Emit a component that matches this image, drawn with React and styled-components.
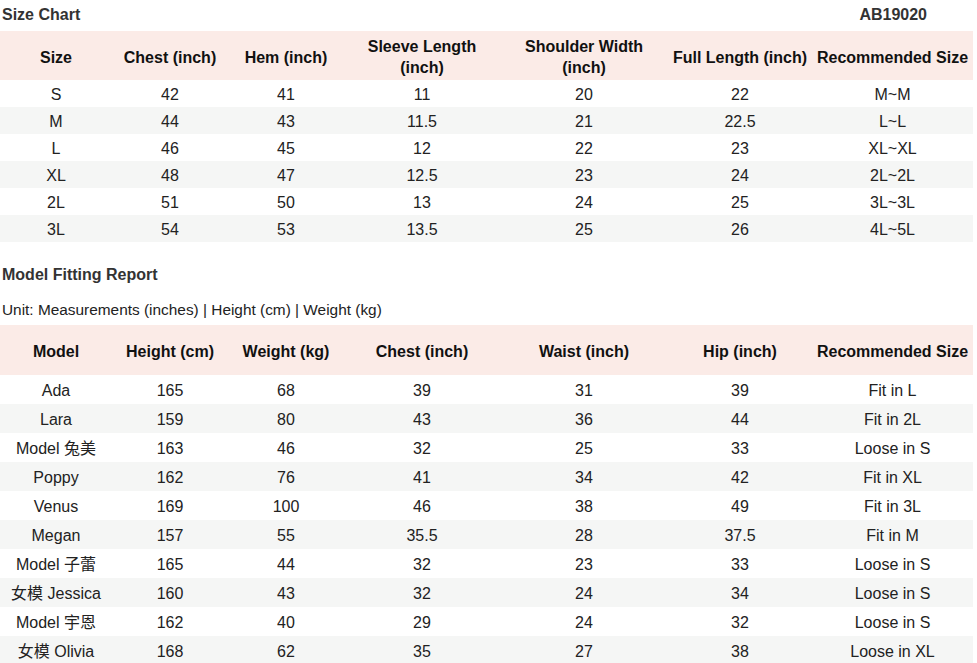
import React from "react";
import styled, { createGlobalStyle } from "styled-components";

const Global = createGlobalStyle`
  html, body { margin: 0; padding: 0; background: #fff; }
  body { font-family: "Liberation Sans", Arial, "Noto Sans CJK SC", sans-serif; }
`;

const Page = styled.div`
  width: 973px;
  color: #222;
`;

const TitleBar = styled.div`
  display: flex;
  justify-content: space-between;
  align-items: center;
  height: 31px;
  padding: 0 46px 2px 2px;
  box-sizing: border-box;
  font-size: 16px;
  font-weight: bold;
  color: #333;
`;

const SectionTitle = styled.div`
  padding: 23px 0 0 2px;
  line-height: 20px;
  font-size: 16px;
  font-weight: bold;
  color: #333;
`;

const Note = styled.div`
  margin-top: 15px;
  margin-bottom: 5px;
  padding-left: 2px;
  line-height: 20px;
  font-size: 15.4px;
  color: #222;
`;

const Table = styled.table`
  width: 973px;
  border-collapse: collapse;
  table-layout: fixed;
  font-size: 16px;
`;

const HeadRow = styled.tr`
  height: ${(p) => p.$h}px;
  background: #fbebe7;
`;

const HeadCell = styled.th`
  padding: 3px 0 0;
  font-weight: bold;
  color: #111;
  line-height: 21px;
  text-align: center;
  vertical-align: middle;
`;

const Row = styled.tr`
  height: ${(p) => p.$h}px;
  background: ${(p) => (p.$odd ? "#f5f6f5" : "#fff")};
`;

const Cell = styled.td`
  padding: 2px 0 0;
  text-align: center;
  vertical-align: middle;
  line-height: 18px;
  white-space: nowrap;
`;

const widths = [112, 116, 116, 156, 168, 144, 161];

const Cols = () => (
  <colgroup>
    {widths.map((w, i) => (
      <col key={i} style={{ width: w }} />
    ))}
  </colgroup>
);

const sizeHead = [
  "Size",
  "Chest (inch)",
  "Hem (inch)",
  ["Sleeve Length", "(inch)"],
  ["Shoulder Width", "(inch)"],
  "Full Length (inch)",
  "Recommended Size",
];

const sizeRows = [
  ["S", "42", "41", "11", "20", "22", "M~M"],
  ["M", "44", "43", "11.5", "21", "22.5", "L~L"],
  ["L", "46", "45", "12", "22", "23", "XL~XL"],
  ["XL", "48", "47", "12.5", "23", "24", "2L~2L"],
  ["2L", "51", "50", "13", "24", "25", "3L~3L"],
  ["3L", "54", "53", "13.5", "25", "26", "4L~5L"],
];

const modelHead = [
  "Model",
  "Height (cm)",
  "Weight (kg)",
  "Chest (inch)",
  "Waist (inch)",
  "Hip (inch)",
  "Recommended Size",
];

const modelRows = [
  ["Ada", "165", "68", "39", "31", "39", "Fit in L"],
  ["Lara", "159", "80", "43", "36", "44", "Fit in 2L"],
  ["Model 兔美", "163", "46", "32", "25", "33", "Loose in S"],
  ["Poppy", "162", "76", "41", "34", "42", "Fit in XL"],
  ["Venus", "169", "100", "46", "38", "49", "Fit in 3L"],
  ["Megan", "157", "55", "35.5", "28", "37.5", "Fit in M"],
  ["Model 子蕾", "165", "44", "32", "23", "33", "Loose in S"],
  ["女模 Jessica", "160", "43", "32", "24", "34", "Loose in S"],
  ["Model 宇恩", "162", "40", "29", "24", "32", "Loose in S"],
  ["女模 Olivia", "168", "62", "35", "27", "38", "Loose in XL"],
];

const DataTable = ({ head, rows, headH, rowH }) => (
  <Table>
    <Cols />
    <thead>
      <HeadRow $h={headH}>
        {head.map((h, i) => (
          <HeadCell key={i}>
            {Array.isArray(h) ? (
              <>
                {h[0]}
                <br />
                {h[1]}
              </>
            ) : (
              h
            )}
          </HeadCell>
        ))}
      </HeadRow>
    </thead>
    <tbody>
      {rows.map((r, i) => (
        <Row key={i} $h={rowH} $odd={i % 2 === 1}>
          {r.map((c, j) => (
            <Cell key={j}>{c}</Cell>
          ))}
        </Row>
      ))}
    </tbody>
  </Table>
);

export default function App() {
  return (
    <Page>
      <Global />
      <TitleBar>
        <span>Size Chart</span>
        <span>AB19020</span>
      </TitleBar>
      <DataTable head={sizeHead} rows={sizeRows} headH={49} rowH={27} />
      <SectionTitle>Model Fitting Report</SectionTitle>
      <Note>Unit: Measurements (inches) | Height (cm) | Weight (kg)</Note>
      <DataTable head={modelHead} rows={modelRows} headH={50} rowH={29} />
    </Page>
  );
}
